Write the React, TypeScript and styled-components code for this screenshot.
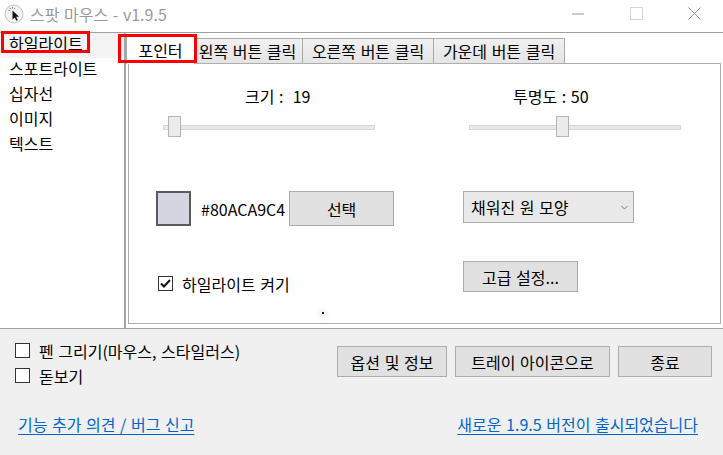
import React from 'react';
import styled, { createGlobalStyle } from 'styled-components';

const GlobalStyle = createGlobalStyle`
  html, body {
    margin: 0;
    padding: 0;
    background: #fff;
  }
  body {
    font-family: "Noto Sans CJK KR", "Noto Sans", sans-serif;
    font-size: 16px;
    word-spacing: 1px;
    color: #000;
  }
  * { box-sizing: border-box; }
`;

const Window = styled.div`
  width: 723px;
  height: 455px;
  display: flex;
  flex-direction: column;
  background: #f0f0f0;
  overflow: hidden;
`;

const TitleBar = styled.div`
  height: 32px;
  flex: none;
  display: flex;
  align-items: center;
  background: #fff;
  padding: 0 0 5px 4px;
`;

const Title = styled.span`
  flex: 1;
  margin-left: 6px;
  color: #9a9a9a;
  font-size: 16px;
  line-height: 20px;
`;

const Controls = styled.div`
  display: flex;
  align-self: stretch;
`;

const ControlButton = styled.div`
  width: 58px;
  display: flex;
  align-items: center;
  justify-content: center;
`;

const Main = styled.div`
  height: 297px;
  flex: none;
  display: flex;
  background: #fff;
  border-top: 1px solid #a0a0a0;
  border-bottom: 1px solid #a0a0a0;
`;

const Sidebar = styled.div`
  width: 126px;
  flex: none;
  border-right: 2px solid #a5a5a5;
`;

const Item = styled.div<{ $selected?: boolean }>`
  position: relative;
  height: 25px;
  line-height: 20px;
  padding-left: 9px;
  background: ${({ $selected }) => ($selected ? '#f3f3f3' : 'transparent')};
`;

const Marker = styled.span<{ $top: number; $left: number; $w: number; $h: number }>`
  position: absolute;
  top: ${({ $top }) => $top}px;
  left: ${({ $left }) => $left}px;
  width: ${({ $w }) => $w}px;
  height: ${({ $h }) => $h}px;
  border: 3px solid #ff0000;
  pointer-events: none;
  z-index: 3;
`;

const TabArea = styled.div`
  flex: 1;
  display: flex;
  flex-direction: column;
  padding: 0 2px 4px 2px;
`;

const TabStrip = styled.div`
  height: 30px;
  flex: none;
  display: flex;
  align-items: flex-end;
`;

const Tab = styled.div<{ $active?: boolean; $w: number }>`
  position: relative;
  width: ${({ $w }) => $w}px;
  height: ${({ $active }) => ($active ? 29 : 25)}px;
  margin: ${({ $active }) => ($active ? '0 -2px -1px -2px' : '0')};
  flex: none;
  display: flex;
  align-items: center;
  justify-content: center;
  white-space: nowrap;
  border: 1px solid #acacac;
  border-bottom: none;
  background: ${({ $active }) => ($active ? '#fff' : 'linear-gradient(#f0f0f0, #e5e5e5)')};
  z-index: ${({ $active }) => ($active ? 2 : 1)};
  & + & {
    margin-left: -1px;
  }
`;

const Panel = styled.div`
  position: relative;
  flex: 1;
  border: 1px solid #adadad;
  display: flex;
  flex-direction: column;
`;

const Row = styled.div<{ $top: number; $h: number }>`
  display: grid;
  grid-template-columns: 334px 1fr;
  margin-top: ${({ $top }) => $top}px;
  height: ${({ $h }) => $h}px;
`;

const Cell = styled.div<{ $pad: number; $align?: string }>`
  display: flex;
  align-items: ${({ $align }) => $align || 'center'};
  padding-left: ${({ $pad }) => $pad}px;
  white-space: nowrap;
`;

const Label = styled.span`
  line-height: 20px;
`;

const SliderBox = styled.div`
  position: relative;
  width: 212px;
  height: 22px;
`;

const Track = styled.div`
  position: absolute;
  left: 0;
  right: 0;
  top: 9px;
  height: 5px;
  background: #e7eaea;
  border: 1px solid #d6d6d6;
`;

const Thumb = styled.div<{ $pos: number }>`
  position: absolute;
  top: 0;
  left: ${({ $pos }) => $pos}px;
  width: 13px;
  height: 21px;
  background: #ececec;
  border: 1px solid #b5b5b5;
`;

const Swatch = styled.div<{ $color: string }>`
  width: 35px;
  height: 35px;
  background: ${({ $color }) => $color};
  border: 2px solid #5a5a5a;
`;

const HexText = styled.span`
  margin: 0 4px 0 10px;
`;

const Button = styled.button<{ $w: number; $h: number }>`
  width: ${({ $w }) => $w}px;
  height: ${({ $h }) => $h}px;
  background: #e1e1e1;
  border: 1px solid #adadad;
  font-family: inherit;
  font-size: 16px;
  word-spacing: 1px;
  color: #000;
  padding: 0;
  flex: none;
`;

const Select = styled.div`
  width: 171px;
  height: 32px;
  align-self: flex-start;
  display: flex;
  align-items: center;
  justify-content: space-between;
  padding: 0 5px 0 7px;
  background: #e9e9e9;
  border: 1px solid #acacac;
`;

const CheckRow = styled.label`
  display: flex;
  align-items: center;
  gap: 9px;
  height: 15px;
  line-height: 20px;
`;

const Box = styled.span`
  width: 15px;
  height: 15px;
  flex: none;
  background: #fff;
  border: 1px solid #333;
  display: flex;
  align-items: center;
  justify-content: center;
`;

const Speck = styled.span`
  position: absolute;
  left: 193px;
  top: 248px;
  width: 2px;
  height: 2px;
  background: #111;
  box-shadow: 0 1px 6px 2px rgba(0, 0, 0, 0.12);
`;

const Bottom = styled.div`
  flex: 1;
  display: flex;
  flex-direction: column;
  padding: 14px 11px 0 15px;
`;

const BottomTop = styled.div`
  display: flex;
  justify-content: space-between;
  align-items: flex-start;
`;

const Checks = styled.div`
  display: flex;
  flex-direction: column;
  gap: 10px;
`;

const ButtonGroup = styled.div`
  display: flex;
  margin-top: 3px;
  gap: 8px;
`;

const LinkRow = styled.div`
  display: flex;
  justify-content: space-between;
  margin-top: 31px;
  padding: 0 14px 0 3px;
  line-height: 20px;
`;

const Link = styled.a`
  color: #0066cc;
  text-decoration: underline;
  text-underline-offset: 3px;
  cursor: pointer;
`;

const AppIcon = () => (
  <svg width="20" height="20" viewBox="0 0 20 20">
    <circle cx="10" cy="10" r="9" fill="#f2f2f2" stroke="#c4c4c4" />
    <path d="M8.5 6.5 L8.5 15.5 L10.7 13.4 L12.4 16.8 L13.8 16.1 L12.1 12.8 L15 12.8 Z" fill="#111" />
    <path d="M6.8 5 L5.6 3.8 M8.4 4.6 L8.4 3 M6.2 6.6 L4.6 6.6 M10 5 L11 3.9" stroke="#777" strokeWidth="0.9" />
  </svg>
);

const Check = () => (
  <svg width="11" height="9" viewBox="0 0 11 9">
    <path d="M1 4.5 L4 7.5 L10 1" fill="none" stroke="#111" strokeWidth="2" />
  </svg>
);

const Chevron = () => (
  <svg width="7" height="5" viewBox="0 0 7 5">
    <path d="M0.5 1 L3.5 4 L6.5 1" fill="none" stroke="#777" strokeWidth="1" />
  </svg>
);

const sideItems = ['하일라이트', '스포트라이트', '십자선', '이미지', '텍스트'];
const tabs = [
  { label: '포인터', w: 69 },
  { label: '왼쪽 버튼 클릭', w: 111 },
  { label: '오른쪽 버튼 클릭', w: 132 },
  { label: '가운데 버튼 클릭', w: 132 },
];

const App = () => {
  return (
    <Window>
      <GlobalStyle />
      <TitleBar>
        <AppIcon />
        <Title>스팟 마우스 - v1.9.5</Title>
        <Controls>
          <ControlButton>
            <svg width="12" height="2" viewBox="0 0 12 2">
              <path d="M0 1 H12" stroke="#9a9a9a" strokeWidth="1" />
            </svg>
          </ControlButton>
          <ControlButton>
            <svg width="13" height="13" viewBox="0 0 13 13">
              <rect x="0.5" y="0.5" width="12" height="12" fill="none" stroke="#d6d6d6" />
            </svg>
          </ControlButton>
          <ControlButton>
            <svg width="13" height="13" viewBox="0 0 13 13">
              <path d="M0.5 0.5 L12.5 12.5 M12.5 0.5 L0.5 12.5" stroke="#9a9a9a" strokeWidth="1" />
            </svg>
          </ControlButton>
        </Controls>
      </TitleBar>

      <Main>
        <Sidebar>
          {sideItems.map((name, i) => (
            <Item key={name} $selected={i === 0}>
              {name}
              {i === 0 && <Marker $top={-2} $left={1} $w={89} $h={22} />}
            </Item>
          ))}
        </Sidebar>

        <TabArea>
          <TabStrip>
            {tabs.map((t, i) => (
              <Tab key={t.label} $active={i === 0} $w={t.w}>
                {t.label}
                {i === 0 && <Marker $top={-2} $left={-9} $w={79} $h={29} />}
              </Tab>
            ))}
          </TabStrip>
          <Panel>
            <Row $top={22} $h={20}>
              <Cell $pad={116}>
                <Label>크기 :&nbsp;&nbsp;19</Label>
              </Cell>
              <Cell $pad={50}>
                <Label>투명도 : 50</Label>
              </Cell>
            </Row>
            <Row $top={10} $h={22}>
              <Cell $pad={34}>
                <SliderBox>
                  <Track />
                  <Thumb $pos={5} />
                </SliderBox>
              </Cell>
              <Cell $pad={6}>
                <SliderBox>
                  <Track />
                  <Thumb $pos={87} />
                </SliderBox>
              </Cell>
            </Row>
            <Row $top={53} $h={35}>
              <Cell $pad={27}>
                <Swatch $color="#d5d4e1" />
                <HexText>#80ACA9C4</HexText>
                <Button $w={105} $h={35}>선택</Button>
              </Cell>
              <Cell $pad={0} $align="flex-start">
                <Select>
                  <span>채워진 원 모양</span>
                  <Chevron />
                </Select>
              </Cell>
            </Row>
            <Row $top={35} $h={31}>
              <Cell $pad={29} $align="flex-end">
                <CheckRow style={{ marginBottom: 1 }}>
                  <Box>
                    <Check />
                  </Box>
                  하일라이트 켜기
                </CheckRow>
              </Cell>
              <Cell $pad={0}>
                <Button $w={115} $h={31}>고급 설정...</Button>
              </Cell>
            </Row>
            <Speck />
          </Panel>
        </TabArea>
      </Main>

      <Bottom>
        <BottomTop>
          <Checks>
            <CheckRow>
              <Box />
              펜 그리기(마우스, 스타일러스)
            </CheckRow>
            <CheckRow>
              <Box />
              돋보기
            </CheckRow>
          </Checks>
          <ButtonGroup>
            <Button $w={110} $h={31}>옵션 및 정보</Button>
            <Button $w={155} $h={31}>트레이 아이콘으로</Button>
            <Button $w={94} $h={31}>종료</Button>
          </ButtonGroup>
        </BottomTop>
        <LinkRow>
          <Link>기능 추가 의견 / 버그 신고</Link>
          <Link>새로운 1.9.5 버전이 출시되었습니다</Link>
        </LinkRow>
      </Bottom>
    </Window>
  );
};

export default App;
